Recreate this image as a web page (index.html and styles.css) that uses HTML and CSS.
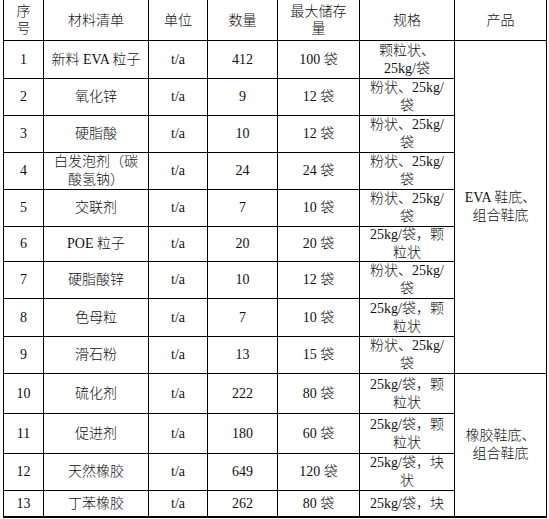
FILE: index.html
```html
<!DOCTYPE html>
<html lang="zh-CN">
<head>
<meta charset="utf-8">
<title>材料清单</title>
<link rel="stylesheet" href="styles.css">
</head>
<body>
<div class="page">
  <div class="sheet">
    <div class="cell head">序号</div>
    <div class="cell head">材料清单</div>
    <div class="cell head">单位</div>
    <div class="cell head">数量</div>
    <div class="cell head">最大储存量</div>
    <div class="cell head">规格</div>
    <div class="cell head">产品</div>

    <div class="cell">1</div>
    <div class="cell">新料 EVA 粒子</div>
    <div class="cell">t/a</div>
    <div class="cell">412</div>
    <div class="cell">100 袋</div>
    <div class="cell">颗粒状、25kg/袋</div>
    <div class="cell span9">EVA 鞋底、组合鞋底</div>

    <div class="cell">2</div>
    <div class="cell">氧化锌</div>
    <div class="cell">t/a</div>
    <div class="cell">9</div>
    <div class="cell">12 袋</div>
    <div class="cell">粉状、25kg/袋</div>

    <div class="cell">3</div>
    <div class="cell">硬脂酸</div>
    <div class="cell">t/a</div>
    <div class="cell">10</div>
    <div class="cell">12 袋</div>
    <div class="cell">粉状、25kg/袋</div>

    <div class="cell">4</div>
    <div class="cell">白发泡剂（碳酸氢钠）</div>
    <div class="cell">t/a</div>
    <div class="cell">24</div>
    <div class="cell">24 袋</div>
    <div class="cell">粉状、25kg/袋</div>

    <div class="cell">5</div>
    <div class="cell">交联剂</div>
    <div class="cell">t/a</div>
    <div class="cell">7</div>
    <div class="cell">10 袋</div>
    <div class="cell">粉状、25kg/袋</div>

    <div class="cell">6</div>
    <div class="cell">POE 粒子</div>
    <div class="cell">t/a</div>
    <div class="cell">20</div>
    <div class="cell">20 袋</div>
    <div class="cell">25kg/袋，颗粒状</div>

    <div class="cell">7</div>
    <div class="cell">硬脂酸锌</div>
    <div class="cell">t/a</div>
    <div class="cell">10</div>
    <div class="cell">12 袋</div>
    <div class="cell">粉状、25kg/袋</div>

    <div class="cell">8</div>
    <div class="cell">色母粒</div>
    <div class="cell">t/a</div>
    <div class="cell">7</div>
    <div class="cell">10 袋</div>
    <div class="cell">25kg/袋，颗粒状</div>

    <div class="cell">9</div>
    <div class="cell">滑石粉</div>
    <div class="cell">t/a</div>
    <div class="cell">13</div>
    <div class="cell">15 袋</div>
    <div class="cell">粉状、25kg/袋</div>

    <div class="cell">10</div>
    <div class="cell">硫化剂</div>
    <div class="cell">t/a</div>
    <div class="cell">222</div>
    <div class="cell">80 袋</div>
    <div class="cell">25kg/袋，颗粒状</div>
    <div class="cell span4">橡胶鞋底、组合鞋底</div>

    <div class="cell">11</div>
    <div class="cell">促进剂</div>
    <div class="cell">t/a</div>
    <div class="cell">180</div>
    <div class="cell">60 袋</div>
    <div class="cell">25kg/袋，颗粒状</div>

    <div class="cell">12</div>
    <div class="cell">天然橡胶</div>
    <div class="cell">t/a</div>
    <div class="cell">649</div>
    <div class="cell">120 袋</div>
    <div class="cell">25kg/袋，块状</div>

    <div class="cell">13</div>
    <div class="cell">丁苯橡胶</div>
    <div class="cell">t/a</div>
    <div class="cell">262</div>
    <div class="cell">80 袋</div>
    <div class="cell">25kg/袋，块</div>
  </div>
</div>
</body>
</html>
```
FILE: styles.css
```css
html, body {
  margin: 0;
  padding: 0;
  background: #fff;
}

.page {
  height: 519px;
  overflow: hidden;
}

.sheet {
  display: grid;
  grid-template-columns: 39px 104px 58px 69px 81px 94px 91px;
  grid-template-rows: 40px 37px 36px 36px 36px 36px 34px 36px 37px 36px 39px 39px 36px 25px;
  gap: 1px;
  padding: 1px 1px 2px 1px;
  background: #000;
  width: max-content;
  margin: -1px 0 0 3px;
  font-family: "Liberation Serif", "Noto Sans CJK SC", serif;
  font-size: 14px;
  font-weight: 300;
  color: #111;
}

.cell {
  background: #fff;
  display: flex;
  align-items: center;
  justify-content: center;
  text-align: center;
  padding: 0 7px;
  line-height: 18px;
  overflow: hidden;
}

.head {
  line-height: 17px;
}

.span9 {
  grid-row: span 9;
}

.span4 {
  grid-row: span 4;
}
```
